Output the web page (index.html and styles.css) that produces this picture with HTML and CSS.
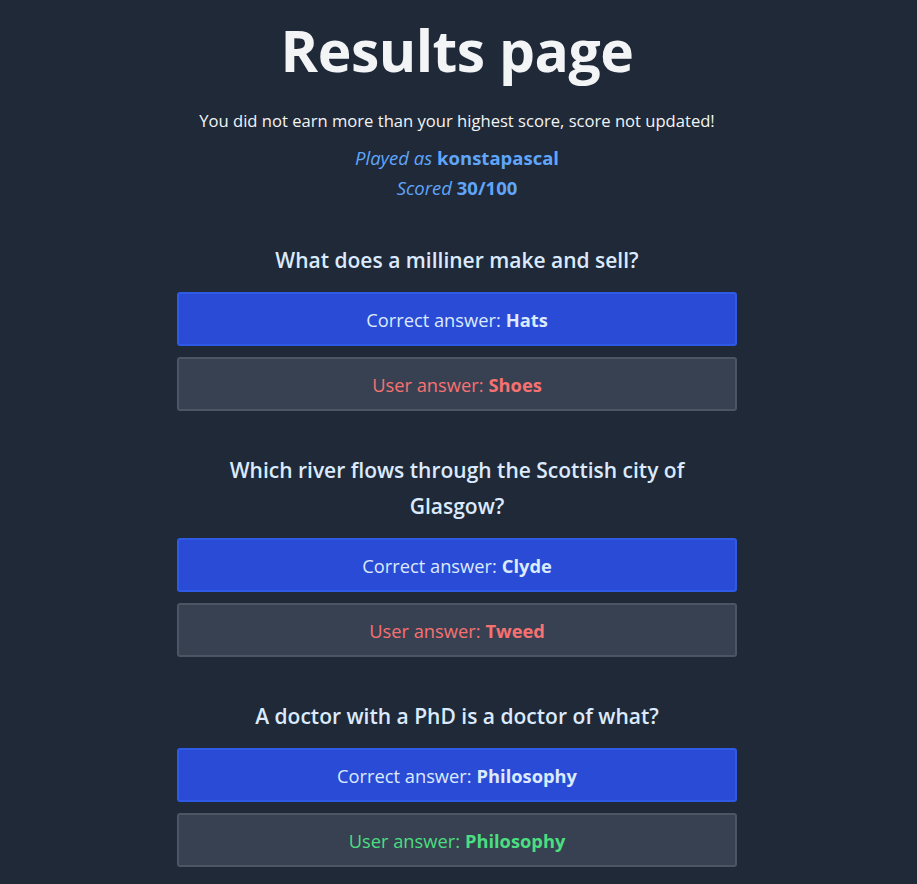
FILE: index.html
```html
<!DOCTYPE html>
<html lang="en">
<head>
<meta charset="utf-8">
<title>Results page</title>
<link rel="stylesheet" href="styles.css">
</head>
<body>
<main class="page">
  <h1 class="title">Results page</h1>
  <p class="notice">You did not earn more than your highest score, score not updated!</p>
  <p class="meta"><em>Played as</em> <strong>konstapascal</strong></p>
  <p class="meta"><em>Scored</em> <strong>30/100</strong></p>

  <section class="question">
    <h2 class="q-text">What does a milliner make and sell?</h2>
    <div class="answer correct">Correct answer: <strong>Hats</strong></div>
    <div class="answer user wrong">User answer: <strong>Shoes</strong></div>
  </section>

  <section class="question">
    <h2 class="q-text">Which river flows through the Scottish city of Glasgow?</h2>
    <div class="answer correct">Correct answer: <strong>Clyde</strong></div>
    <div class="answer user wrong">User answer: <strong>Tweed</strong></div>
  </section>

  <section class="question">
    <h2 class="q-text">A doctor with a PhD is a doctor of what?</h2>
    <div class="answer correct">Correct answer: <strong>Philosophy</strong></div>
    <div class="answer user right">User answer: <strong>Philosophy</strong></div>
  </section>
</main>
</body>
</html>
```

FILE: styles.css
```css
html, body {
  margin: 0;
  padding: 0;
  background: #1f2937;
}
body {
  font-family: "Open Sans", "Noto Sans", "Liberation Sans", sans-serif;
  color: #f3f4f6;
  padding-right: 3px;
}
.page {
  width: 560px;
  margin: 0 auto;
  padding: 20px 0 40px;
  text-align: center;
}
.title {
  margin: 0 -40px;
  font-size: 57px;
  line-height: 60px;
  font-weight: 700;
  color: #f3f4f6;
  letter-spacing: -0.5px;
}
.notice {
  margin: 29px -40px 10px;
  font-size: 16.6px;
  line-height: 24px;
  color: #f3f4f6;
}
.meta {
  margin: 0;
  font-size: 18.5px;
  line-height: 30px;
  color: #60a5fa;
}
.meta em {
  font-style: italic;
}
.meta strong {
  font-weight: 700;
}
.question {
  margin-top: 39px;
}
.question + .question {
  margin-top: 41px;
}
.q-text {
  margin: 0 0 14px;
  font-size: 21px;
  line-height: 36px;
  font-weight: 600;
  color: #dbeafe;
  padding: 0 40px;
}
.answer {
  box-sizing: border-box;
  height: 54px;
  display: flex;
  align-items: center;
  justify-content: center;
  font-size: 18.3px;
  border-radius: 3px;
  border: 2px solid;
}
.answer strong {
  font-weight: 700;
  margin-left: 5px;
}
.correct {
  background: #2a4bd6;
  border-color: #2f5ae6;
  color: #dbeafe;
}
.user {
  margin-top: 11px;
  background: #374151;
  border-color: #4b5563;
}
.wrong {
  color: #f87171;
}
.right {
  color: #4ade80;
}
```
